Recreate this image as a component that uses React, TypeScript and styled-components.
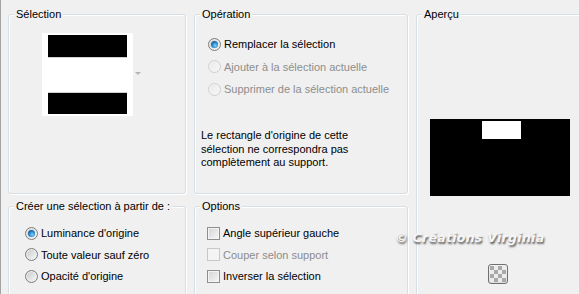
import styled, { createGlobalStyle } from 'styled-components'

const GlobalStyle = createGlobalStyle`
	html, body {
		margin: 0;
		padding: 0;
		height: 100%;
		overflow: hidden;
		background: #f0f0f0;
	}
	body {
		font-family: "Liberation Sans", Arial, sans-serif;
		font-size: 11px;
		color: #000;
	}
`

const Window = styled.div`
	position: relative;
	display: grid;
	grid-template-columns: 178px 214px 170px;
	grid-template-rows: 180px 100px;
	grid-template-areas:
		'sel op prev'
		'src opt prev';
	column-gap: 8px;
	row-gap: 12px;
	padding: 14px 0 0 7px;
	height: 294px;
	box-sizing: border-box;
	border-left: 1px solid #a3a3a3;
`

const Group = styled.section<{ $area: string }>`
	grid-area: ${(p) => p.$area};
	display: flex;
	flex-direction: column;
	box-sizing: border-box;
	border: 1px solid #d5dfe5;
	border-radius: 3px;
	box-shadow: inset 1px 1px 0 #fff, 1px 1px 0 #fff;
	min-width: 0;
`

const Title = styled.div`
	width: fit-content;
	margin: -8px 0 0 5px;
	padding: 0 2px;
	height: 14px;
	line-height: 14px;
	background: #f0f0f0;
	white-space: nowrap;
`

const SelectionBody = styled.div`
	display: flex;
	align-items: center;
	margin-top: 12px;
	padding-left: 33px;
`

const DropArrow = styled.div`
	width: 0;
	height: 0;
	margin-left: 2px;
	margin-top: -2px;
	border-left: 3px solid transparent;
	border-right: 3px solid transparent;
	border-top: 3px solid #b4b4b4;
`

const List = styled.div<{ $top: number; $left: number; $row: number }>`
	display: flex;
	flex-direction: column;
	margin-top: ${(p) => p.$top}px;
	padding-left: ${(p) => p.$left}px;
	& > * {
		height: ${(p) => p.$row}px;
	}
`

const Choice = styled.label<{ $disabled?: boolean }>`
	display: flex;
	align-items: center;
	gap: 3px;
	white-space: nowrap;
	color: ${(p) => (p.$disabled ? '#8d8d8d' : '#000')};
`

const RadioDot = styled.span<{ $checked?: boolean; $disabled?: boolean }>`
	position: relative;
	flex: none;
	width: 13px;
	height: 13px;
	box-sizing: border-box;
	border-radius: 50%;
	border: 1px solid ${(p) => (p.$disabled ? '#cfcfcf' : '#7c7d7d')};
	background: ${(p) =>
		p.$disabled
			? 'linear-gradient(135deg, #e8e8e8, #f8f8f8)'
			: 'linear-gradient(135deg, #c6c7c8, #fbfbfb)'};
	box-shadow: inset 0 0 0 1px ${(p) => (p.$disabled ? '#f4f4f4' : '#eeeeee')};
	&::after {
		content: '';
		display: ${(p) => (p.$checked ? 'block' : 'none')};
		position: absolute;
		left: 2px;
		top: 2px;
		width: 7px;
		height: 7px;
		border-radius: 50%;
		background: radial-gradient(circle at 60% 65%, #7fd8fa 0%, #2a86cf 45%, #0c3866 100%);
	}
`

const CheckBox = styled.span<{ $disabled?: boolean }>`
	flex: none;
	width: 13px;
	height: 13px;
	box-sizing: border-box;
	border: 1px solid ${(p) => (p.$disabled ? '#c8c8c8' : '#8e8f8f')};
	background: ${(p) =>
		p.$disabled ? '#f4f4f4' : 'linear-gradient(135deg, #d2d3d4, #f8f8f8)'};
	box-shadow: inset 0 0 0 1px #f4f4f4;
`

const Note = styled.p`
	margin: 28.5px 0 0;
	padding-left: 6px;
	line-height: 13.5px;
`

const PreviewBody = styled.div`
	display: flex;
	flex-direction: column;
	align-items: flex-start;
	margin-top: 98px;
	padding-left: 13px;
`

const CheckerButton = styled.button`
	width: 20px;
	height: 20px;
	margin: 68px 0 0 58px;
	padding: 1px;
	box-sizing: border-box;
	border: 1px solid #707070;
	border-radius: 3px;
	background: linear-gradient(#f2f2f2, #dcdcdc);
	display: flex;
	align-items: center;
	justify-content: center;
`

const Watermark = styled.div`
	position: absolute;
	left: 394px;
	top: 230px;
	font-family: "DejaVu Sans", sans-serif;
	font-weight: bold;
	font-style: italic;
	font-size: 12.5px;
	letter-spacing: 0.3px;
	color: #f6f6f6;
	text-shadow: 1px 2px 2px #5a5a5a;
	white-space: nowrap;
	pointer-events: none;
`

const Radio = ({ label, checked, disabled }: { label: string; checked?: boolean; disabled?: boolean }) => (
	<Choice $disabled={disabled}>
		<RadioDot $checked={checked} $disabled={disabled} />
		{label}
	</Choice>
)

const Check = ({ label, disabled }: { label: string; disabled?: boolean }) => (
	<Choice $disabled={disabled}>
		<CheckBox $disabled={disabled} />
		{label}
	</Choice>
)

const Checker = () => (
	<svg width="16" height="16" viewBox="0 0 4 4" shapeRendering="crispEdges">
		<rect width="4" height="4" fill="#ececec" />
		{[0, 1, 2, 3].map((y) =>
			[0, 1, 2, 3].map((x) =>
				(x + y) % 2 === 0 ? <rect key={`${x}-${y}`} x={x} y={y} width="1" height="1" fill="#a9a9a9" /> : null
			)
		)}
	</svg>
)

const App = () => {
	return (
		<>
			<GlobalStyle />
			<Window>
				<Group $area="sel">
					<Title>Sélection</Title>
					<SelectionBody>
						<svg width="91" height="83" viewBox="0 0 91 83" shapeRendering="crispEdges">
							<rect width="91" height="83" fill="#fff" />
							<rect x="6" y="2" width="79" height="22" fill="#000" />
							<rect x="6" y="24" width="79" height="1" fill="#d0d0d0" />
							<rect x="6" y="59" width="79" height="1" fill="#d0d0d0" />
							<rect x="6" y="60" width="79" height="21" fill="#000" />
						</svg>
						<DropArrow />
					</SelectionBody>
				</Group>

				<Group $area="op">
					<Title>Opération</Title>
					<List $top={12} $left={13} $row={22.5}>
						<Radio label="Remplacer la sélection" checked />
						<Radio label="Ajouter à la sélection actuelle" disabled />
						<Radio label="Supprimer de la sélection actuelle" disabled />
					</List>
					<Note>
						Le rectangle d'origine de cette
						<br />
						sélection ne correspondra pas
						<br />
						complètement au support.
					</Note>
				</Group>

				<Group $area="prev">
					<Title>Aperçu</Title>
					<PreviewBody>
						<svg width="140" height="77" viewBox="0 0 140 77" shapeRendering="crispEdges">
							<rect width="140" height="77" fill="#000" />
							<rect x="52" y="2" width="39" height="18" fill="#fff" />
						</svg>
						<CheckerButton type="button" aria-label="Transparence">
							<Checker />
						</CheckerButton>
					</PreviewBody>
				</Group>

				<Group $area="src">
					<Title>Créer une sélection à partir de :</Title>
					<List $top={9.25} $left={16} $row={21.5}>
						<Radio label="Luminance d'origine" checked />
						<Radio label="Toute valeur sauf zéro" />
						<Radio label="Opacité d'origine" />
					</List>
				</Group>

				<Group $area="opt">
					<Title>Options</Title>
					<List $top={9.5} $left={12} $row={21.5}>
						<Check label="Angle supérieur gauche" />
						<Check label="Couper selon support" disabled />
						<Check label="Inverser la sélection" />
					</List>
				</Group>

				<Watermark>© Créations Virginia</Watermark>
			</Window>
		</>
	)
}

export default App
